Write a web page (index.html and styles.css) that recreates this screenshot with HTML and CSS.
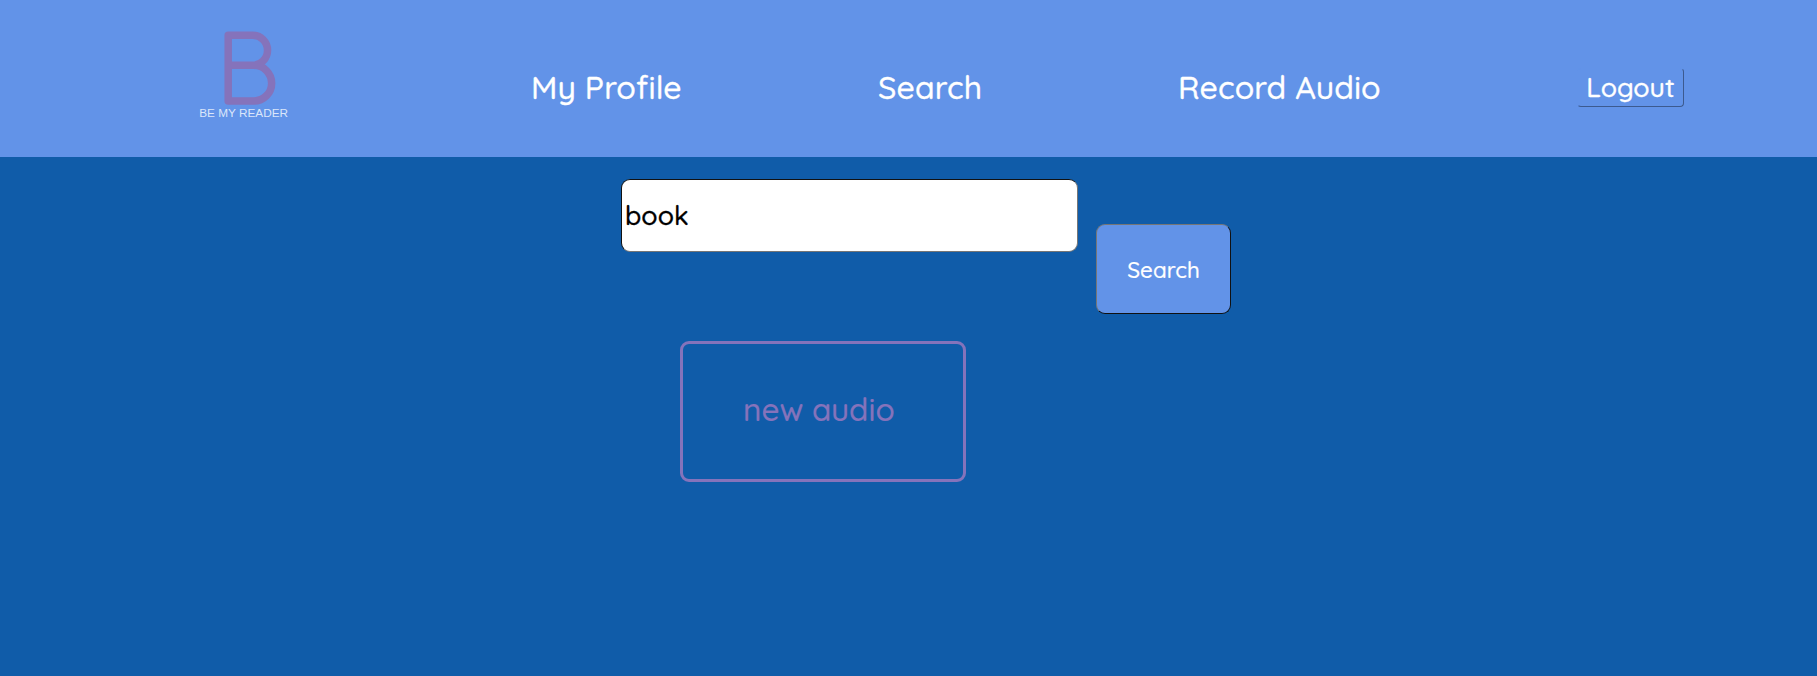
FILE: index.html
```html
<!DOCTYPE html>
<html lang="en">
<head>
<meta charset="utf-8">
<title>Be My Reader</title>
<link rel="stylesheet" href="styles.css">
</head>
<body>
<header class="header">
  <svg class="logo" viewBox="0 0 90 90" role="img" aria-label="Be My Reader">
    <path class="logo-mark" d="M28.2 5.2H52.5A15.05 15.05 0 0 1 52.5 35.3H28.2M52.5 35.3H53.8A17.85 17.85 0 0 1 53.8 71H28.2V5.2H40M28.2 60V71H40"/>
    <text class="logo-text" x="-0.8" y="86.5" textLength="88.8" lengthAdjust="spacingAndGlyphs">BE MY READER</text>
  </svg>
  <nav class="nav">
    <a class="link link-profile">My Profile</a>
    <a class="link link-search">Search</a>
    <a class="link link-record">Record Audio</a>
  </nav>
  <button class="logout">Logout</button>
</header>
<main class="main">
  <form class="search">
    <input class="search-input" type="text" value="book">
    <button class="search-button" type="button">Search</button>
  </form>
  <section class="result"><span class="result-title">new audio</span></section>
</main>
</body>
</html>
```
FILE: styles.css
```css
* { box-sizing: border-box; }
body {
  margin: 0;
  min-height: 676px;
  background: #105ca9;
  font-family: Quicksand, Lato, sans-serif;
  font-weight: 500;
}
.header {
  display: flex;
  align-items: flex-start;
  height: 157px;
  padding-left: 200px;
  background: #6293e8;
  color: #fff;
}
.logo { flex: none; width: 90px; height: 90px; margin-top: 30px; overflow: visible; }
.logo-mark {
  fill: none;
  stroke: #8573bb;
  stroke-width: 7.5;
  stroke-linejoin: round;
}
.logo-text { font: 11.8px "Liberation Sans", sans-serif; fill: #dbe6fa; }
.nav { display: flex; flex: none; margin: 67px 0 0 241px; }
.link {
  font-size: 32px;
  line-height: 40px;
  letter-spacing: 0.1px;
  white-space: nowrap;
  -webkit-text-stroke: 0.3px #fff;
}
.link-profile { width: 347px; }
.link-search { width: 300px; }
.link-record { width: 399px; }
.logout {
  flex: none;
  width: 107px;
  height: 39px;
  margin-top: 68px;
  padding: 0 0 2px;
  border: 1px solid;
  border-color: #6293e8 #3c5a8f #3c5a8f #6293e8;
  border-radius: 4px;
  background: #6293e8;
  color: #fff;
  font: inherit;
  font-size: 26.67px;
  line-height: 34px;
  -webkit-text-stroke: 0.3px #fff;
}
.search {
  display: flex;
  align-items: flex-start;
  gap: 18px;
  padding: 22px 0 0 621px;
}
.search-input {
  width: 457px;
  height: 73px;
  padding: 0 2px 2px 3px;
  border: 1px solid;
  border-color: #111 #767676 #767676 #111;
  border-radius: 9px;
  background: #fff;
  color: #000;
  font: inherit;
  font-size: 26.67px;
  -webkit-text-stroke: 0.3px #000;
}
.search-button {
  width: 135px;
  height: 90px;
  margin-top: 45px;
  padding: 2px 0 0;
  border: 1px solid;
  border-color: #767676 #111 #111 #767676;
  border-radius: 9px;
  background: #6293e8;
  color: #fff;
  font: inherit;
  font-size: 22.4px;
  -webkit-text-stroke: 0.2px #fff;
}
.result {
  width: 286px;
  height: 141px;
  margin: 27px 0 0 680px;
  padding: 45px 0 0 60px;
  border: 3px solid #8573bb;
  border-radius: 9px;
  color: #8573bb;
  font-size: 31.5px;
  line-height: 40px;
  -webkit-text-stroke: 0.2px #8573bb;
}
```
